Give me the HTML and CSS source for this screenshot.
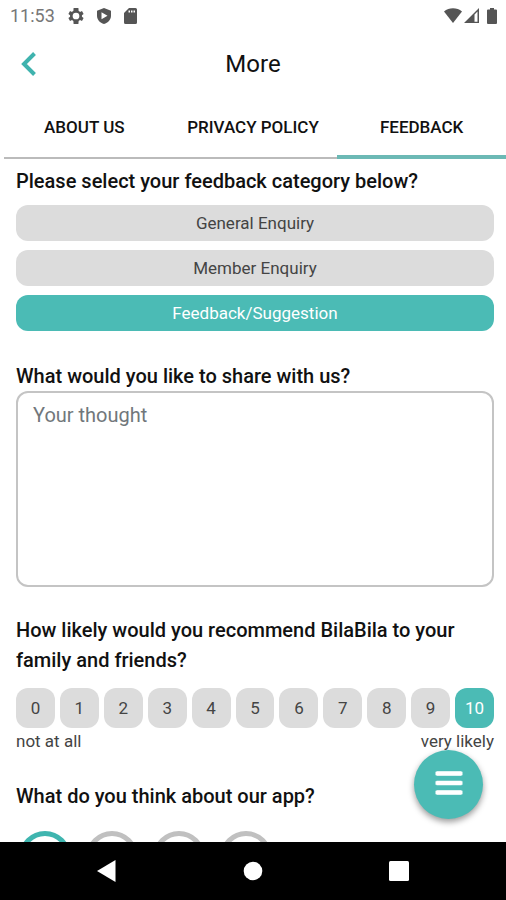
FILE: index.html
```html
<!DOCTYPE html>
<html lang="en">
<head>
<meta charset="utf-8">
<meta name="viewport" content="width=device-width, initial-scale=1">
<title>More</title>
<link rel="stylesheet" href="styles.css">
</head>
<body>
<div class="status">
  <span class="clock">11:53</span>
  <svg width="16" height="16" viewBox="2 2 20 20"><path fill="currentColor" fill-rule="evenodd" d="M19.4 13a7 7 0 0 0 0-2l2.100-1.600-2-3.500-2.500 1a7 7 0 0 0-1.700-1L15 2H9l-.3 3.900a7 7 0 0 0-1.700 1l-2.500-1-2 3.500L4.600 11a7 7 0 0 0 0 2l-2.100 1.600 2 3.500 2.500-1a7 7 0 0 0 1.700 1L9 22h6l.3-3.900a7 7 0 0 0 1.700-1l2.500 1 2-3.500zM12 16.200a4.200 4.200 0 1 1 0-8.400 4.200 4.200 0 0 1 0 8.400z"/></svg>
  <svg width="14" height="16" viewBox="0 0 14 16"><path fill="currentColor" fill-rule="evenodd" d="M7 0l7 2.700v5.100c0 4-3 7.200-7 8.200-4-1-7-4.200-7-8.200V2.700zM4.500 4.300v7L10.500 7.800z"/></svg>
  <svg width="13" height="16" viewBox="0 0 13 16"><path fill="currentColor" fill-rule="evenodd" d="M5 0h6.500A1.500 1.500 0 0 1 13 1.500v13a1.500 1.500 0 0 1-1.500 1.500h-10A1.500 1.500 0 0 1 0 14.500V5zM4.500 2.500v2H6v-2zM7 2.500v2h1.500v-2zM9.500 2.500v2H11v-2z"/></svg>
  <span class="spacer"></span>
  <svg class="signals" width="54" height="16" viewBox="0 0 54 16"><g fill="currentColor"><path d="M0 3.500C5-.7 13-.7 18 3.500L9 15z"/><path fill-rule="evenodd" d="M20 15L35 0v15zM30.500 6.500v7.300h3V3.500z"/><path d="M46 0h4v1.500h2a1 1 0 0 1 1 1V15a1 1 0 0 1-1 1h-8a1 1 0 0 1-1-1V2.500a1 1 0 0 1 1-1h2z"/></g></svg>
</div>
<header class="header">
  <button class="back" aria-label="Back"><svg width="16" height="24" viewBox="0 0 16 24"><path d="M13.500 1.500L3 12l10.500 10.500" fill="none" stroke="currentColor" stroke-width="4"/></svg></button>
  <h1>More</h1>
</header>
<nav class="tabs">
  <a href="#about">ABOUT US</a>
  <a href="#privacy">PRIVACY POLICY</a>
  <a href="#feedback" class="active" aria-current="page">FEEDBACK</a>
</nav>
<main class="content">
  <form>
    <fieldset class="category">
      <legend>Please select your feedback category below?</legend>
      <label><input type="radio" name="category">General Enquiry</label>
      <label><input type="radio" name="category">Member Enquiry</label>
      <label><input type="radio" name="category" checked>Feedback/Suggestion</label>
    </fieldset>
    <div class="share">
      <label for="thought">What would you like to share with us?</label>
      <textarea id="thought" placeholder="Your thought"></textarea>
    </div>
    <fieldset class="recommend">
      <legend>How likely would you recommend BilaBila to your family and friends?</legend>
      <div class="scores">
        <label><input type="radio" name="score">0</label>
        <label><input type="radio" name="score">1</label>
        <label><input type="radio" name="score">2</label>
        <label><input type="radio" name="score">3</label>
        <label><input type="radio" name="score">4</label>
        <label><input type="radio" name="score">5</label>
        <label><input type="radio" name="score">6</label>
        <label><input type="radio" name="score">7</label>
        <label><input type="radio" name="score">8</label>
        <label><input type="radio" name="score">9</label>
        <label><input type="radio" name="score" checked>10</label>
      </div>
      <div class="ends"><span>not at all</span><span>very likely</span></div>
    </fieldset>
    <fieldset class="opinion">
      <legend>What do you think about our app?</legend>
      <div class="faces">
        <input type="radio" name="opinion" aria-label="Great" checked>
        <input type="radio" name="opinion" aria-label="Good">
        <input type="radio" name="opinion" aria-label="Fair">
        <input type="radio" name="opinion" aria-label="Poor">
      </div>
    </fieldset>
  </form>
  <button class="menu" aria-label="Menu"><svg width="28" height="24" viewBox="0 0 28 24"><path d="M1.500 2.500h25M1.500 12h25M1.500 21.500h25" stroke="currentColor" stroke-width="4.600"/><path d="M.5 2.500h27M.5 12h27M.5 21.500h27" stroke="currentColor" stroke-width="3.600"/></svg></button>
</main>
<footer class="system">
  <button aria-label="System back"><svg width="20" height="22" viewBox="0 0 20 22"><path fill="currentColor" d="M18.500 0v22L0 11z"/></svg></button>
  <button aria-label="Home"><svg width="20" height="20" viewBox="0 0 20 20"><circle fill="currentColor" cx="10" cy="10" r="9.300"/></svg></button>
  <button aria-label="Recent apps"><svg width="20" height="20" viewBox="0 0 20 20"><rect fill="currentColor" width="20" height="20" rx="1.500"/></svg></button>
</footer>
</body>
</html>
```
FILE: styles.css
```css
:root {
  --teal: #4bbbb5;
  --grey: #dcdcdc;
}

* {
  box-sizing: border-box;
}

body {
  margin: 0;
  height: 100vh;
  display: flex;
  flex-direction: column;
  background: #fff;
  color: #111;
  font-family: Roboto, sans-serif;
}

button {
  display: flex;
  align-items: center;
  justify-content: center;
  padding: 0;
  border: 0;
  background: none;
  color: inherit;
}

.status {
  display: flex;
  align-items: center;
  flex: none;
  gap: 13px;
  height: 31px;
  padding: 0 8px 0 10px;
  color: #555;
}

.clock {
  font-size: 18px;
  color: #777;
}

.spacer {
  flex: 1;
}

.header {
  display: grid;
  grid-template-columns: 40px 1fr 40px;
  align-items: center;
  flex: none;
  height: 66px;
  padding: 0 9px;
}

.back {
  height: 40px;
  color: #3fb3ae;
}

h1 {
  margin: 0;
  text-align: center;
  font-size: 24px;
  font-weight: 400;
}

.tabs {
  display: grid;
  grid-template-columns: repeat(3, 1fr);
  flex: none;
  height: 62px;
  background: linear-gradient(#bbb, #bbb) center bottom / calc(100% - 8px) 2px no-repeat;
}

.tabs a {
  display: flex;
  align-items: center;
  justify-content: center;
  padding-top: 2px;
  border-bottom: 4px solid transparent;
  color: #111;
  font-size: 17px;
  font-weight: 500;
  text-decoration: none;
}

.tabs .active {
  border-color: #6cb9b5;
}

.content {
  position: relative;
  flex: 1;
  min-height: 0;
}

form {
  height: 100%;
  overflow: hidden;
  padding: 7px 12px 0 16px;
}

fieldset {
  min-width: 0;
  margin: 0;
  padding: 0;
  border: 0;
}

legend,
.share label {
  display: block;
  padding: 0;
  font-size: 20px;
  font-weight: 500;
  line-height: 30px;
}

.category label,
.scores label {
  display: flex;
  align-items: center;
  justify-content: center;
  background: var(--grey);
  border-radius: 12px;
  color: #444;
  font-size: 17px;
}

.category label {
  height: 36px;
  margin-top: 9px;
}

.category label input,
.scores input {
  position: absolute;
  opacity: 0;
}

.category label:has(:checked),
.scores label:has(:checked) {
  background: var(--teal);
  color: #fff;
}

.share {
  margin-top: 30px;
}

textarea {
  display: block;
  width: 100%;
  height: 196px;
  padding: 10px 15px;
  border: 2px solid #c4c4c4;
  border-radius: 12px;
  background: #fff;
  font: 20px/24px Roboto, sans-serif;
  resize: none;
}

textarea::placeholder {
  color: #71777b;
}

.recommend {
  margin-top: 28px;
}

.scores {
  display: grid;
  grid-template-columns: repeat(11, 1fr);
  gap: 5px;
  margin-top: 13px;
}

.scores label {
  height: 40px;
}

.ends {
  display: flex;
  justify-content: space-between;
  color: #444;
  font-size: 17px;
  line-height: 26px;
}

.opinion {
  margin-top: 27px;
}

.faces {
  display: flex;
  gap: 15px;
  margin-top: 20px;
  padding-left: 3px;
}

.faces input {
  appearance: none;
  width: 52px;
  height: 52px;
  margin: 0;
  border: 5px solid #c0c0c0;
  border-radius: 50%;
}

.faces input:checked {
  border-color: #3fb5af;
}

.menu {
  position: absolute;
  right: 23px;
  bottom: 23px;
  width: 69px;
  height: 69px;
  padding-bottom: 4px;
  border-radius: 50%;
  background: var(--teal);
  box-shadow: 0 3px 6px rgba(0, 0, 0, 0.4);
  color: #fff;
}

.system {
  display: flex;
  align-items: center;
  justify-content: center;
  gap: 106px;
  flex: none;
  height: 58px;
  background: #000;
  color: #fff;
}

.system button {
  width: 40px;
  height: 40px;
}
```
